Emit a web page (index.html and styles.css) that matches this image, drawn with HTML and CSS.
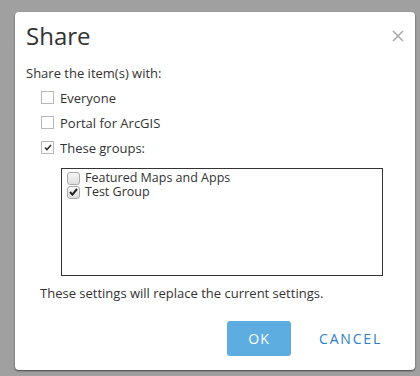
FILE: index.html
```html
<!DOCTYPE html>
<html lang="en">
<head>
    <meta charset="UTF-8">
    <title>Share</title>
    <link rel="stylesheet" href="styles.css">
</head>
<body>
    <!-- Share dialog -->
    <div class="dialog">
        <div class="dialog-header">
            <h2 class="dialog-title">Share</h2>
            <span class="close-btn">
                <svg width="12" height="12" viewBox="0 0 12 12"><path d="M1 1 L11 11 M11 1 L1 11" stroke="#aaaaaa" stroke-width="1.6" fill="none"/></svg>
            </span>
        </div>

        <p class="intro">Share the item(s) with:</p>

        <div class="options">
            <label class="option"><span class="box"></span>Everyone</label>
            <label class="option"><span class="box"></span>Portal for ArcGIS</label>
            <label class="option"><span class="box checked"><svg width="8" height="7" viewBox="0 0 8 7"><path d="M1 3.6 L3 5.6 L7 1" stroke="#333" stroke-width="1.6" fill="none"/></svg></span>These groups:</label>
        </div>

        <div class="group-list">
            <label class="group"><span class="gbox"></span>Featured Maps and Apps</label>
            <label class="group"><span class="gbox checked"><svg width="9" height="8" viewBox="0 0 9 8"><path d="M1 4 L3.4 6.6 L8 1" stroke="#222" stroke-width="2" fill="none"/></svg></span>Test Group</label>
        </div>

        <p class="note">These settings will replace the current settings.</p>

        <div class="buttons">
            <button type="button" class="ok-btn">OK</button>
            <button type="button" class="cancel-btn">CANCEL</button>
        </div>
    </div>
</body>
</html>
```

FILE: styles.css
```css
* { margin: 0; padding: 0; box-sizing: border-box; }
body { background-color: #a0a0a0; font-family: "Open Sans", "DejaVu Sans", sans-serif; color: #333; padding: 12px 5px 0 15px; height: 376px; overflow: hidden; }
.dialog { width: 400px; height: 358px; background-color: #fff; border-radius: 4px; box-shadow: 0 1px 2px rgba(0, 0, 0, 0.6); padding: 0 0 0 11px; }
.dialog-header { display: flex; justify-content: space-between; align-items: flex-start; height: 49px; padding: 10px 11px 0 0; }
.dialog-title { font-weight: normal; font-size: 24px; line-height: 28px; color: #333; }
.close-btn { margin-top: 3px; }
.intro { font-size: 13px; line-height: 24px; }
.options { padding: 0 0 0 15px; }
.option { display: flex; align-items: center; height: 25px; font-size: 13px; }
.box { width: 13px; height: 13px; border: 1px solid #b8b8b8; background: #fff; margin-right: 6px; display: flex; justify-content: center; align-items: center; }
.group-list { margin: 8px 0 0 35px; width: 322px; height: 108px; border: 1px solid #333; padding: 2px 0 0 4px; }
.group { display: flex; align-items: center; height: 14px; font-size: 12.5px; line-height: 14px; }
.gbox { width: 13px; height: 13px; border: 1px solid #a9a9a9; border-radius: 3px; background: linear-gradient(#f6f6f6, #dedede); margin: 0 5px 0 1px; display: flex; justify-content: center; align-items: center; }
.note { font-size: 13px; line-height: 20px; margin: 7px 0 0 14px; }
.buttons { display: flex; justify-content: flex-end; align-items: center; margin-top: 18px; padding-right: 33px; }
button { font-family: "Open Sans", "DejaVu Sans", sans-serif; font-size: 14px; letter-spacing: 1px; border: none; cursor: pointer; }
.ok-btn { width: 64px; height: 35px; border-radius: 3px; background-color: #5dade0; color: #fff; }
.cancel-btn { background: none; color: #2c80c5; margin-left: 28px; letter-spacing: 1.8px; }
```
